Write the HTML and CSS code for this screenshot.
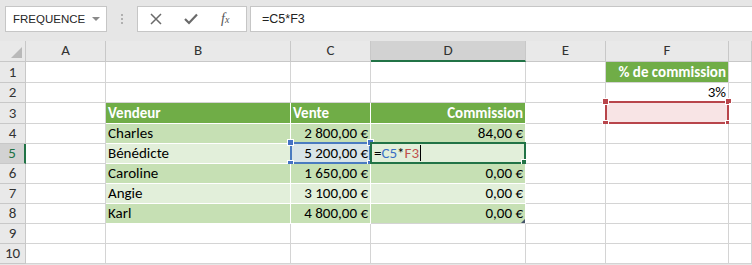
FILE: index.html
```html
<!DOCTYPE html>
<html lang="fr">
<head>
<meta charset="UTF-8" />
<title>Commission</title>
<link rel="stylesheet" href="styles.css">
</head>
<body>
<!-- Formula bar -->
<div class="toolbar">
  <div class="namebox">FREQUENCE <span class="caret"></span></div>
  <div class="dots"><i></i><i></i><i></i></div>
  <div class="fbuttons">
    <svg width="12" height="12" viewBox="0 0 12 12"><path d="M1 1L11 11M11 1L1 11" stroke="#6a6a6a" stroke-width="1.5" fill="none"/></svg>
    <svg width="14" height="12" viewBox="0 0 14 12"><path d="M1 6L5 10L13 1.5" stroke="#6a6a6a" stroke-width="2.2" fill="none"/></svg>
    <span class="fx">f<small>x</small></span>
  </div>
  <div class="formula">=C5*F3</div>
</div>

<!-- Sheet -->
<div class="sheet">
  <div class="row head">
    <div class="rh corner"><span class="tri"></span></div>
    <div class="ch">A</div><div class="ch">B</div><div class="ch">C</div>
    <div class="ch sel">D</div><div class="ch">E</div><div class="ch">F</div><div class="ch"></div>
  </div>
  <div class="row r21">
    <div class="rh">1</div><div></div><div></div><div></div><div></div><div></div>
    <div class="thead right">% de commission</div><div></div>
  </div>
  <div class="row">
    <div class="rh">2</div><div></div><div></div><div></div><div></div><div></div>
    <div class="right">3%</div><div></div>
  </div>
  <div class="row r21">
    <div class="rh">3</div><div></div>
    <div class="thead t">Vendeur</div><div class="thead t">Vente</div><div class="thead t right">Commission</div>
    <div></div>
    <div class="ref-red"><span class="box"><i class="h tl"></i><i class="h tr"></i><i class="h bl"></i><i class="h br"></i></span></div>
    <div></div>
  </div>
  <div class="row">
    <div class="rh">4</div><div></div>
    <div class="dark t">Charles</div><div class="dark t right">2 800,00 €</div><div class="dark t right">84,00 €</div>
    <div></div><div></div><div></div>
  </div>
  <div class="row">
    <div class="rh rsel">5</div><div></div>
    <div class="light t">Bénédicte</div>
    <div class="light t right ref-blue">5 200,00 €<span class="box"><i class="h tl"></i><i class="h tr"></i><i class="h bl"></i><i class="h br"></i></span></div>
    <div class="light t edit">=<span class="c-blue">C5</span>*<span class="c-red">F3</span><span class="cursor"></span><span class="box"><i class="fill"></i></span></div>
    <div></div><div></div><div></div>
  </div>
  <div class="row">
    <div class="rh">6</div><div></div>
    <div class="dark t">Caroline</div><div class="dark t right">1 650,00 €</div><div class="dark t right">0,00 €</div>
    <div></div><div></div><div></div>
  </div>
  <div class="row">
    <div class="rh">7</div><div></div>
    <div class="light t">Angie</div><div class="light t right">3 100,00 €</div><div class="light t right">0,00 €</div>
    <div></div><div></div><div></div>
  </div>
  <div class="row">
    <div class="rh">8</div><div></div>
    <div class="dark t">Karl</div><div class="dark t right">4 800,00 €</div><div class="dark t right last">0,00 €<span class="resize"></span></div>
    <div></div><div></div><div></div>
  </div>
  <div class="row">
    <div class="rh">9</div><div></div><div></div><div></div><div></div><div></div><div></div><div></div>
  </div>
  <div class="row">
    <div class="rh">10</div><div></div><div></div><div></div><div></div><div></div><div></div><div></div>
  </div>
</div>
</body>
</html>
```

FILE: styles.css
```css
body {
  margin: 0;
  background: #e6e6e6;
  font-family: "Carlito", "Liberation Sans", Arial, sans-serif;
  font-size: 15px;
  color: #000;
  overflow: hidden;
}

/* Formula bar */
.toolbar {
  height: 41px;
  display: flex;
  align-items: flex-start;
  padding: 6px 0 0 5px;
  box-sizing: border-box;
}
.namebox {
  width: 102px;
  height: 26px;
  box-sizing: border-box;
  background: #fff;
  border: 1px solid #c6c6c6;
  display: flex;
  align-items: center;
  padding-left: 7px;
  font-family: "Liberation Sans", Arial, sans-serif;
  font-size: 11.5px;
  color: #262626;
}
.caret {
  margin-left: auto;
  margin-right: 6px;
  border-left: 4px solid transparent;
  border-right: 4px solid transparent;
  border-top: 4px solid #8a8a8a;
}
.dots {
  width: 30px;
  display: flex;
  flex-direction: column;
  align-items: center;
  gap: 2px;
  padding-top: 8px;
}
.dots i {
  width: 2px;
  height: 2px;
  background: #b0b0b0;
}
.fbuttons {
  width: 110px;
  height: 26px;
  box-sizing: border-box;
  background: #fff;
  border: 1px solid #c6c6c6;
  display: flex;
  align-items: center;
  gap: 22px;
  padding-left: 12px;
}
.fx {
  font-family: "Liberation Serif", serif;
  font-style: italic;
  font-size: 14px;
  color: #555;
  margin-left: 1px;
}
.fx small {
  font-size: 10px;
}
.formula {
  flex: 1;
  margin-left: 3px;
  height: 26px;
  box-sizing: border-box;
  background: #fff;
  border: 1px solid #c6c6c6;
  border-right: none;
  padding-left: 11px;
  line-height: 24px;
  font-family: "Liberation Sans", Arial, sans-serif;
  font-size: 12.5px;
  color: #222;
}

/* Grid */
.row {
  display: grid;
  grid-template-columns: 26px 80px 185px 80px 155px 80px 123px 1fr;
  height: 20px;
}
.row.r21, .row.head {
  height: 21px;
}
.row > div {
  box-sizing: border-box;
  background: #fff;
  border-right: 1px solid #d4d4d4;
  border-bottom: 1px solid #d4d4d4;
  padding: 0 2px;
  line-height: 19px;
  white-space: nowrap;
  position: relative;
}
.row.r21 > div {
  line-height: 20px;
}
.right {
  text-align: right;
}

/* Headers */
.row > .ch, .row > .rh {
  background: #e9e9e9;
  border-color: #c8c8c8;
  color: #333;
  text-align: center;
  padding: 0;
}
.row > .ch.sel {
  background: #d2d2d2;
  border-bottom: 2px solid #217346;
}
.row > .rh.rsel {
  background: #d2d2d2;
  border-right: 2px solid #217346;
  color: #217346;
}
.tri {
  position: absolute;
  right: 3px;
  bottom: 3px;
  border-left: 11px solid transparent;
  border-bottom: 11px solid #b9b9b9;
}

/* Table */
.row > .t {
  border-color: #fff;
}
.row > .thead {
  background: #70ad47;
  color: #fff;
  font-weight: bold;
}
.row > .dark {
  background: #c6e0b4;
}
.row > .light {
  background: #e2efda;
}
.row > .last {
  border-bottom-color: #d4d4d4;
}
.resize {
  position: absolute;
  right: 0;
  bottom: 0;
  border-left: 4px solid transparent;
  border-bottom: 4px solid #44546a;
}

/* Range references */
.box {
  position: absolute;
  top: -2px;
  left: -1px;
  right: -1px;
  bottom: -1px;
  border: 2px solid;
}
.h {
  position: absolute;
  width: 5px;
  height: 5px;
  border: 1px solid #fff;
}
.h.tl { left: -5px; top: -5px; }
.h.tr { right: -5px; top: -5px; }
.h.bl { left: -5px; bottom: -5px; }
.h.br { right: -5px; bottom: -5px; }

.row > .ref-red {
  background: #f8e4e5;
}
.ref-red .box {
  border-color: #b8454b;
}
.ref-red .h {
  background: #b8454b;
}
.row > .ref-blue {
  background: #d9e5e8;
}
.ref-blue .box {
  border-color: #4a7bc0;
}
.ref-blue .h {
  background: #4472c4;
}
.edit .box {
  border-color: #217346;
  left: -1px;
}
.fill {
  position: absolute;
  right: -4px;
  bottom: -4px;
  width: 5px;
  height: 5px;
  background: #217346;
  border: 1px solid #fff;
}
.row > .edit {
  padding-left: 3px;
}
.c-blue { color: #3a6fc4; }
.c-red { color: #c0504d; }
.cursor {
  display: inline-block;
  width: 1px;
  height: 16px;
  background: #000;
  vertical-align: -3px;
  margin-left: 1px;
}
```
